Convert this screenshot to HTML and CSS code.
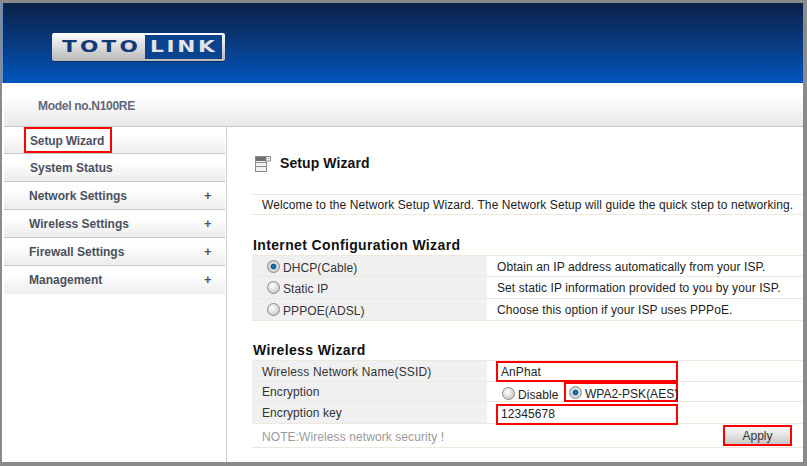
FILE: index.html
```html
<!DOCTYPE html>
<html lang="en">
<head>
<meta charset="utf-8">
<title>TOTOLINK Setup Wizard</title>
<link rel="stylesheet" href="styles.css">
</head>
<body>
<div class="window">
  <header class="header">
    <div class="logo"><div class="logo-left"><span class="logo-toto">TOTO</span></div><div class="logo-right"><span class="logo-link">LINK</span></div></div>
  </header>
  <div class="model">Model no.N100RE</div>
  <div class="main">
    <nav class="sidebar">
      <div class="nav-item nav-first"><span class="mark-nav">Setup Wizard</span></div>
      <div class="nav-item nav-plain">System Status</div>
      <div class="nav-item">Network Settings<span class="plus">+</span></div>
      <div class="nav-item">Wireless Settings<span class="plus">+</span></div>
      <div class="nav-item">Firewall Settings<span class="plus">+</span></div>
      <div class="nav-item nav-last">Management<span class="plus">+</span></div>
    </nav>
    <main class="content">
      <div class="title-row">
        <svg class="title-icon" width="16" height="16" viewBox="0 0 16 16">
          <rect x="0.5" y="0.5" width="11" height="15" fill="#f2f2f2" stroke="#8c8c8c"/>
          <rect x="1" y="1" width="10" height="4" fill="#6e6e6e"/>
          <rect x="1" y="6" width="10" height="1" fill="#8c8c8c"/>
          <rect x="1" y="10" width="10" height="1" fill="#8c8c8c"/>
          <rect x="11" y="0.5" width="4.5" height="4.5" fill="#fff" stroke="#8c8c8c"/>
          <rect x="13" y="2" width="1" height="1" fill="#666"/>
        </svg>
        <h1 class="title">Setup Wizard</h1>
      </div>
      <div class="welcome">Welcome to the Network Setup Wizard. The Network Setup will guide the quick step to networking.</div>
      <h2 class="section section-internet">Internet Configuration Wizard</h2>
      <div class="table table-top">
        <div class="row"><div class="cell-left"><input class="radio" type="radio" name="wan" checked><span class="opt">DHCP(Cable)</span></div><div class="cell-right">Obtain an IP address automatically from your ISP.</div></div>
        <div class="row"><div class="cell-left"><input class="radio" type="radio" name="wan"><span class="opt">Static IP</span></div><div class="cell-right">Set static IP information provided to you by your ISP.</div></div>
        <div class="row"><div class="cell-left"><input class="radio" type="radio" name="wan"><span class="opt">PPPOE(ADSL)</span></div><div class="cell-right">Choose this option if your ISP uses PPPoE.</div></div>
      </div>
      <h2 class="section section-wireless">Wireless Wizard</h2>
      <div class="table table-top">
        <div class="row"><div class="cell-left cell-label cell-ssid">Wireless Network Name(SSID)</div><div class="cell-right cell-field"><div class="mark-field">AnPhat</div></div></div>
        <div class="row row-enc"><div class="cell-left cell-label">Encryption</div><div class="cell-right cell-enc"><label class="enc-off"><input class="radio" type="radio" name="enc"><span class="opt-enc">Disable</span></label><label class="enc-on"><input class="radio" type="radio" name="enc" checked><span class="opt-enc">WPA2-PSK(AES)</span></label></div></div>
        <div class="row"><div class="cell-left cell-label">Encryption key</div><div class="cell-right cell-field"><div class="mark-field mark-key">12345678</div></div></div>
        <div class="row row-note"><div class="note">NOTE:Wireless network security !</div><button class="apply" type="button">Apply</button></div>
      </div>
    </main>
  </div>
</div>
</body>
</html>
```
FILE: styles.css
```css
* { box-sizing: border-box; }
html, body { margin: 0; padding: 0; background: #fff; }
body { font-family: "Liberation Sans", Arial, sans-serif; font-size: 12px; color: #222; }

.window {
  width: 807px; height: 466px; overflow: hidden;
  display: flex; flex-direction: column;
  background: #fff;
  border-style: solid; border-color: #8a8a8a;
  border-width: 3px 4px 4px 2px;
}

.header {
  height: 80px; flex: none;
  background: linear-gradient(#0a2048 0%, #0a3a80 50%, #0056bd 100%);
  border-left: 1px solid #5d8fd0;
  padding: 30px 0 0 49px;
}
.logo {
  width: 173px; height: 28px;
  display: flex; align-items: center;
  padding: 2px 3px 2px 0;
  border-radius: 2px;
  background: linear-gradient(#fdfdfd, #b9b9b9);
  box-shadow: 0 1px 1px rgba(0,0,0,.4);
  font-family: "DejaVu Sans", sans-serif; font-weight: 700; font-size: 16px; line-height: 24px;
}
.logo-left { width: 93px; height: 24px; padding-left: 10px; }
.logo-right { flex: 1; height: 24px; padding-left: 5px; background: #0b438f; }
.logo-toto, .logo-link { display: inline-block; transform-origin: 0 50%; transform: scaleX(1.35); white-space: nowrap; }
.logo-toto { color: #123a78; letter-spacing: 2.4px; }
.logo-link { color: #e4e4e4; letter-spacing: 2px; }

.model {
  height: 44px; flex: none; margin-left: 2px;
  padding: 16px 0 0 34px;
  background: linear-gradient(#fff 30%, #e9e9e9);
  border-bottom: 1px solid #c8c8c8;
  color: #62687a; font-weight: 700; font-size: 12px; line-height: 14px; letter-spacing: -0.3px;
}

.main { flex: 1; display: flex; min-height: 0; }

.sidebar {
  width: 223px; flex: none; margin-left: 2px;
  border-right: 1px solid #cfcfcf;
  padding-right: 1px;
}
.nav-item {
  height: 28px; position: relative;
  padding: 7px 0 0 25px;
  background: linear-gradient(#fff 30%, #ececec);
  border-bottom: 1px solid #c8c8c8;
  color: #4b5060; font-weight: 700; font-size: 12px; line-height: 14px;
}
.nav-first { height: 27px; padding: 0 0 0 20px; }
.nav-plain { padding-left: 26px; }
.nav-last { border-bottom: 0; }
.mark-nav {
  display: block; width: 88px; height: 26px;
  border: 2px solid #f00;
  padding: 5px 0 0 4px; line-height: 14px;
  background: #fff; letter-spacing: -0.15px;
}
.plus { position: absolute; left: 200px; top: 7px; color: #555; font-weight: 700; font-size: 13px; }

.content { flex: 1; min-width: 0; padding-left: 25px; letter-spacing: .085px; }

.title-row { height: 67px; display: flex; padding-top: 29px; align-items: flex-start; }
.title-icon { margin: 0 0 0 3px; flex: none; }
.title { margin: -1px 0 0 9px; font-size: 14px; line-height: 16px; font-weight: 700; color: #111; }

.welcome {
  height: 21px; padding: 3px 0 0 10px; line-height: 14px;
  border-top: 1px solid #eee9dc; border-bottom: 1px solid #eee9dc;
  white-space: nowrap; color: #222;
}

.section { margin: 0; padding-left: 1px; font-size: 14px; line-height: 16px; font-weight: 700; color: #111; letter-spacing: .37px; }
.section-internet { padding-top: 22px; height: 40px; }
.section-wireless { padding-top: 21px; height: 39px; }

.table-top { border-top: 1px solid #eee9dc; }
.row {
  height: 22px; display: flex;
  border-bottom: 1px solid #eee9dc;
  line-height: 14px;
}
.table-top .row:first-child { height: 21px; }
.cell-left {
  width: 235px; flex: none; background: #f0f0f0;
  display: flex; align-items: center; padding-left: 15px; color: #333;
}
.opt { margin-top: 3px; }
.opt-enc { margin-top: 4px; }
.cell-label { padding: 1px 0 0 10px; }
.cell-ssid { letter-spacing: .18px; }
.cell-right { flex: 1; padding: 4px 0 0 10px; color: #222; white-space: nowrap; }

.radio {
  appearance: none; -webkit-appearance: none;
  width: 13px; height: 13px; margin: 0 3px 0 0; flex: none;
  border-radius: 50%; border: 1px solid #8a8a8a;
  background: radial-gradient(circle at 40% 35%, #fff, #c4c4c4 85%);
}
.radio:checked {
  background: radial-gradient(circle, #1a86c8 0, #0b5a96 30%, #dcdcdc 42%, #c4c4c4 100%);
}

.cell-field { padding: 0 0 0 9px; }
.mark-field {
  width: 182px; height: 21px;
  border: 2px solid #f00;
  padding: 2px 0 0 3px; line-height: 14px; background: #fff;
}
.row-enc { height: 20px; }
.cell-enc { display: flex; padding: 0 0 0 15px; align-items: center; }
.enc-off { display: flex; align-items: center; width: 62px; padding-top: 3px; }
.enc-on {
  display: flex; align-items: center; width: 114px; height: 20px; margin-top: 1px;
  border: 2px solid #f00; padding-left: 3px; white-space: nowrap; letter-spacing: 0;
}
.mark-key { margin-top: 2px; padding-top: 1px; position: relative; }

.row-note { height: 24px; justify-content: space-between; }
.note { padding: 6px 0 0 10px; color: #9a9a9a; }
.apply {
  width: 69px; height: 21px; margin: 1px 11px 0 0; padding: 0;
  border: 2px solid #f00;
  background: linear-gradient(#fafafa, #c9c9c9);
  font: 12px/14px "Liberation Sans", Arial, sans-serif; color: #333;
}
```
